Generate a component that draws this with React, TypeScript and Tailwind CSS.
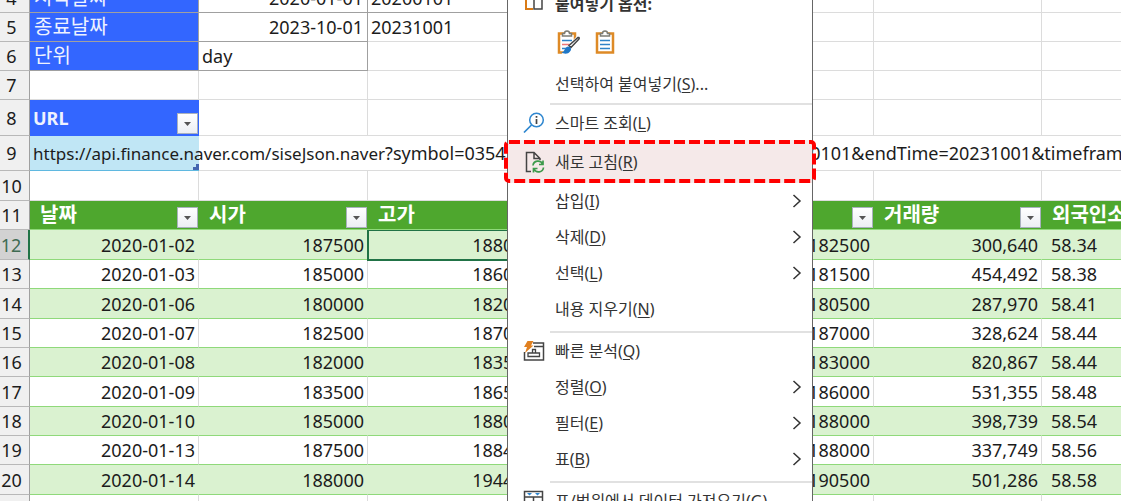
import clsx from 'clsx'
import type { ReactNode } from 'react'

interface Preco {
  data: string
  abertura: string
  maxima: string
  fechamento: string
  volume: string
  estrangeiros: string
}

const precos: Preco[] = [
  { data: '2020-01-02', abertura: '187500', maxima: '188000', fechamento: '182500', volume: '300,640', estrangeiros: '58.34' },
  { data: '2020-01-03', abertura: '185000', maxima: '186000', fechamento: '181500', volume: '454,492', estrangeiros: '58.38' },
  { data: '2020-01-06', abertura: '180000', maxima: '182000', fechamento: '180500', volume: '287,970', estrangeiros: '58.41' },
  { data: '2020-01-07', abertura: '182500', maxima: '187000', fechamento: '187000', volume: '328,624', estrangeiros: '58.44' },
  { data: '2020-01-08', abertura: '182000', maxima: '183500', fechamento: '183000', volume: '820,867', estrangeiros: '58.44' },
  { data: '2020-01-09', abertura: '183500', maxima: '186500', fechamento: '186000', volume: '531,355', estrangeiros: '58.48' },
  { data: '2020-01-10', abertura: '185000', maxima: '188000', fechamento: '188000', volume: '398,739', estrangeiros: '58.54' },
  { data: '2020-01-13', abertura: '187500', maxima: '188400', fechamento: '188000', volume: '337,749', estrangeiros: '58.56' },
  { data: '2020-01-14', abertura: '188000', maxima: '194400', fechamento: '190500', volume: '501,286', estrangeiros: '58.58' },
]

const alturas = ['h-[30px]', 'h-[29px]', 'h-[30px]', 'h-[29px]', 'h-[29px]', 'h-[30px]', 'h-[29px]', 'h-[29px]', 'h-[30px]']

const endereco = 'https://api.finance.naver.com/siseJson.naver'
const consulta = '?symbol=035420&requestType=1&startTime=20200101&endTime=20231001&timeframe=day'

const grade = 'border-b border-r border-[#dcdcdc]'
const rotulo = 'border-r border-b border-[#a0a0a0] bg-[#3366ff] p-0 pl-1 text-left text-[20px] font-normal text-[#eef2ff]'

function Numero({ n, ativo }: { n: number; ativo?: boolean }) {
  return (
    <th
      scope="row"
      className={clsx(
        'border-b border-[#b8b8b8] border-r p-0 pr-[6px] text-center font-normal',
        ativo ? 'border-r-2 border-r-[#217346] bg-[#d2d2d2] text-[#3f6b52]' : 'border-r-[#a0a0a0] bg-[#f0f0f0]'
      )}
    >
      {n}
    </th>
  )
}

function Vazias({ n }: { n: number }) {
  return Array.from({ length: n }, (_, i) => <td key={i} className={grade} />)
}

function Filtro({ nome }: { nome: string }) {
  return (
    <button aria-label={nome} className="absolute right-px bottom-px flex size-[21px] items-center justify-center border border-[#a9b1bd] bg-linear-to-b from-white to-[#eceff4]">
      <svg width="7" height="4" viewBox="0 0 7 4">
        <path d="M0 0h7L3.5 4z" fill="#555" />
      </svg>
    </button>
  )
}

function Cabecalho({ nome, filtro = true }: { nome: string; filtro?: boolean }) {
  return (
    <th scope="col" className="relative border-b border-[#8fd97a] bg-[#4ea72e] p-0 pt-[2px] pl-[10px] text-left align-top text-[20px] leading-6 font-bold text-white">
      {nome}
      {filtro && <Filtro nome={nome} />}
    </th>
  )
}

function Planilha() {
  return (
    <table className="-mt-4 w-[1211px] table-fixed border-separate border-spacing-0 text-[18px] leading-6 whitespace-nowrap text-[#1c1c1c]">
      <colgroup>
        <col className="w-[30px]" />
        <col className="w-[169px]" />
        <col className="w-[169px]" />
        <col className="w-[168px]" />
        <col className="w-[169px]" />
        <col className="w-[169px]" />
        <col className="w-[168px]" />
        <col className="w-[169px]" />
      </colgroup>
      <tbody>
        <tr className="h-[29px]">
          <Numero n={4} />
          <th scope="row" className={rotulo}>시작날짜</th>
          <td className="border-r border-b border-[#a0a0a0] p-0 pr-1 text-right">2020-01-01</td>
          <td className="border-r border-b border-[#dcdcdc] border-b-[#a0a0a0] p-0 pl-[3px]">20200101</td>
          <Vazias n={4} />
        </tr>
        <tr className="h-[29px]">
          <Numero n={5} />
          <th scope="row" className={rotulo}>종료날짜</th>
          <td className="border-r border-b border-[#a0a0a0] p-0 pr-1 text-right">2023-10-01</td>
          <td className={clsx(grade, 'p-0 pl-[3px]')}>20231001</td>
          <Vazias n={4} />
        </tr>
        <tr className="h-[29px]">
          <Numero n={6} />
          <th scope="row" className={rotulo}>단위</th>
          <td className="border-r border-b border-[#a0a0a0] p-0 pl-[3px]">day</td>
          <Vazias n={5} />
        </tr>
        <tr className="h-[29px]">
          <Numero n={7} />
          <Vazias n={7} />
        </tr>
        <tr className="h-[36px]">
          <Numero n={8} />
          <th scope="col" className="relative border-b border-[#3366ff] bg-[#3366ff] p-0 pl-[3px] text-left font-bold text-[#eef2ff]">
            URL
            <Filtro nome="URL" />
          </th>
          <Vazias n={6} />
        </tr>
        <tr className="h-[35px]">
          <Numero n={9} />
          <td className="relative border-b border-[#5fb8e0] bg-[#c0e6f5] p-0 pl-[3px]">
            <span className="text-[17px]">{endereco}</span>
            {consulta}
            <svg className="absolute right-0 bottom-0" width="6" height="6" viewBox="0 0 6 6">
              <path d="M0 6V3h3V0h3v6z" fill="#4466b0" />
            </svg>
          </td>
          {Array.from({ length: 6 }, (_, i) => (
            <td key={i} className="border-b border-[#dcdcdc]" />
          ))}
        </tr>
        <tr className="h-[30px]">
          <Numero n={10} />
          <Vazias n={7} />
        </tr>
        <tr className="h-[29px]">
          <Numero n={11} />
          <Cabecalho nome="날짜" />
          <Cabecalho nome="시가" />
          <Cabecalho nome="고가" />
          <Cabecalho nome="저가" />
          <Cabecalho nome="종가" />
          <Cabecalho nome="거래량" />
          <Cabecalho nome="외국인소진율" filtro={false} />
        </tr>
        {precos.map((p, i) => {
          const celula = clsx(
            'border-r border-b border-b-[#8fd97a] p-0',
            i % 2 === 0 ? 'border-r-[#daf2d0] bg-[#daf2d0]' : 'border-r-[#dcdcdc]'
          )
          const numero = clsx(celula, 'pr-[3px] text-right')
          return (
            <tr key={p.data} className={alturas[i]}>
              <Numero n={12 + i} ativo={i === 0} />
              <td className={numero}>{p.data}</td>
              <td className={numero}>{p.abertura}</td>
              <td className={clsx(celula, 'pr-px text-right', i === 0 && 'outline-2 -outline-offset-1 outline-[#217346]')}>{p.maxima}</td>
              <td className={numero} />
              <td className={numero}>{p.fechamento}</td>
              <td className={numero}>{p.volume}</td>
              <td className={clsx(celula, 'pl-[9px]')}>{p.estrangeiros}</td>
            </tr>
          )
        })}
        <tr className="h-[29px]">
          <Numero n={21} />
          <Vazias n={7} />
        </tr>
      </tbody>
    </table>
  )
}

function IconeOpcoes() {
  return (
    <svg width="22" height="22" viewBox="0 0 22 22" fill="none">
      <path d="M10 20H3V4h7" stroke="#d97b16" strokeWidth="2" />
      <path d="M11 7h8v13h-8z" stroke="#444" strokeWidth="1.5" fill="#fff" />
    </svg>
  )
}

function IconePrancheta({ pincel }: { pincel?: boolean }) {
  return (
    <svg width="24" height="26" viewBox="0 0 24 26" fill="none">
      <path d="M3 4.5h16v19H3z" fill="#fff" stroke="#de8a26" strokeWidth="2.5" />
      <path d="M6.500 7V4.500h2a2.500 2.500 0 0 1 5 0h2V7z" fill="#fff" stroke="#7c7c74" strokeWidth="1.500" />
      <path d="M6 11.500h10M6 19.500h10" stroke="#2e83c8" strokeWidth="1.500" />
      <path d="M6 15.500h10" stroke={pincel ? '#ee7777' : '#2e83c8'} strokeWidth="1.500" />
      {pincel && (
        <>
          <path d="M5 26l6-8L21 7l3 2v17z" fill="#fff" />
          <path d="M13 16.500l9-8c1.500-.5 1.500 1 .5 2l-7.500 8z" fill="#fff" stroke="#444" strokeWidth="1.500" />
          <path d="M5 23.500c4 0 3-5 7-6 3 0 4 3 2 5-2 3-6 2.500-9 1z" fill="#2078c8" />
        </>
      )}
    </svg>
  )
}

function IconeBusca() {
  return (
    <svg width="22" height="22" viewBox="0 0 22 22" fill="none" stroke="#2e86cf">
      <circle cx="13.500" cy="8" r="6.800" strokeWidth="1.500" />
      <path d="M8.500 13L1 20.500" strokeWidth="1.700" />
      <path d="M13.500 7v5M13.500 4v1.700" stroke="#444" strokeWidth="1.700" />
    </svg>
  )
}

function IconeAtualizar() {
  return (
    <svg width="22" height="22" viewBox="0 0 22 22" fill="none">
      <path d="M8 20.500H3.500v-19H11l6 6V9M11 1.500v6h6" stroke="#444" strokeWidth="1.500" />
      <path d="M10 14.500a5 5 0 0 1 9.500-1.500M20 9.500v4h-4M20.500 16.500A5 5 0 0 1 11 18M10.500 21.500v-4h4" stroke="#3c9a4b" strokeWidth="1.700" />
    </svg>
  )
}

function IconeAnalise() {
  return (
    <svg width="22" height="22" viewBox="0 0 22 22" fill="none">
      <path d="M10 3h10.500v17H1.500v-8M11 6.500h9" stroke="#444" strokeWidth="1.500" />
      <path d="M5 16.500h11.500V13H5zM9.500 13V9.500h3V13" stroke="#444" strokeWidth="1.300" />
      <path d="M4.500 1h6L8 5.500h2.500L2 13l2-6H1z" fill="#e08020" />
    </svg>
  )
}

function IconeTabela() {
  return (
    <svg width="22" height="22" viewBox="0 0 22 22" fill="none">
      <path d="M1.500 1.500h18v18h-18zM1.500 7h18M1.500 12h18M10.500 7v12" stroke="#444" strokeWidth="1.500" />
      <path d="M4 3h5L6.500 5.500zM12 3h5l-2.500 2.500z" fill="#2e86cf" />
    </svg>
  )
}

interface ItemProps {
  texto: string
  tecla: string
  fim?: string
  icone?: ReactNode
  seta?: boolean
  className?: string
}

function Item({ texto, tecla, fim, icone, seta, className = 'h-9' }: ItemProps) {
  return (
    <button role="menuitem" className={clsx('flex w-full items-center pr-[10px] pl-[15px] text-left', className)}>
      <span className="w-8 shrink-0">{icone}</span>
      <span className="flex-1">
        {texto}(<u className="underline-offset-2">{tecla}</u>){fim}
      </span>
      {seta && (
        <svg width="10" height="14" viewBox="0 0 10 14" fill="none">
          <path d="M1.500 1l6.500 6-6.500 6" stroke="#333" strokeWidth="1.500" />
        </svg>
      )}
    </button>
  )
}

function Separador({ className }: { className?: string }) {
  return <hr className={clsx('ml-[42px] border-t-2 border-[#e1e1e1]', className)} />
}

function MenuContexto() {
  return (
    <div role="menu" className="absolute -top-3 left-[507px] w-[306px] border-x border-[#666] bg-white text-[16px] leading-6 whitespace-nowrap text-[#333]">
      <div className="flex h-8 items-center pl-[15px] font-bold">
        <span className="-mt-2 w-8">
          <IconeOpcoes />
        </span>
        붙여넣기 옵션:
      </div>
      <div className="flex h-11 items-center gap-[14px] pl-[48px]">
        <button aria-label="원본 서식 유지">
          <IconePrancheta pincel />
        </button>
        <button aria-label="붙여넣기">
          <IconePrancheta />
        </button>
      </div>
      <Item texto="선택하여 붙여넣기" tecla="S" fim="..." className="h-[39px]" />
      <Separador />
      <Item texto="스마트 조회" tecla="L" icone={<IconeBusca />} className="h-[35px]" />
      <div className="relative bg-[#f5e9e9]">
        <Item texto="새로 고침" tecla="R" icone={<IconeAtualizar />} className="h-[43px]" />
        {/* Destaque tracejado em volta do item */}
        <div className="pointer-events-none absolute -inset-x-[2px] inset-y-[2px]">
          <svg className="size-full overflow-visible" fill="none">
            <rect width="100%" height="100%" rx="3" stroke="#ff0000" strokeWidth="4" strokeDasharray="11 4" />
          </svg>
        </div>
      </div>
      <Item texto="삽입" tecla="I" seta />
      <Item texto="삭제" tecla="D" seta />
      <Item texto="선택" tecla="L" seta />
      <Item texto="내용 지우기" tecla="N" />
      <Separador className="mt-1" />
      <Item texto="빠른 분석" tecla="Q" icone={<IconeAnalise />} />
      <Item texto="정렬" tecla="O" seta />
      <Item texto="필터" tecla="E" seta />
      <Item texto="표" tecla="B" seta />
      <Separador className="mt-1" />
      <Item texto="표/범위에서 데이터 가져오기" tecla="G" icone={<IconeTabela />} />
    </div>
  )
}

export default function App() {
  return (
    <main className="relative h-screen overflow-hidden bg-white font-['Noto_Sans','Noto_Sans_CJK_KR',sans-serif]">
      <Planilha />
      <MenuContexto />
    </main>
  )
}
